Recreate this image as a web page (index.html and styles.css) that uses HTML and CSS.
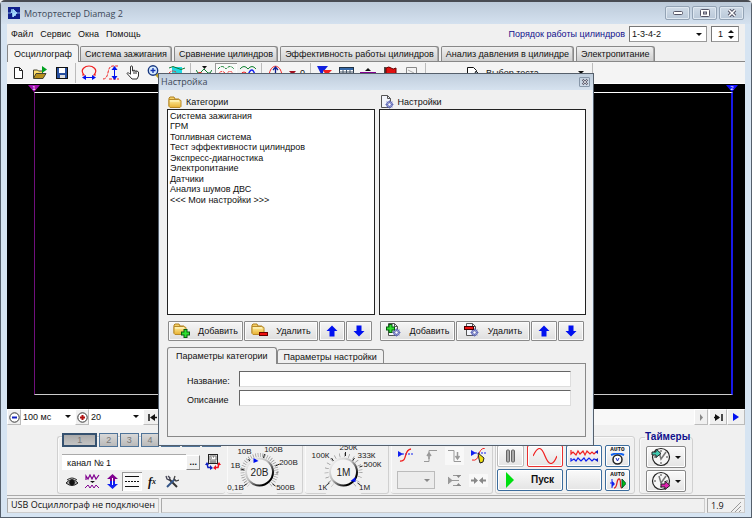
FILE: index.html
```html
<!DOCTYPE html>
<html lang="ru">
<head>
<meta charset="utf-8">
<title>Мотортестер Diamag 2</title>
<link rel="stylesheet" href="styles.css">
</head>
<body>
<svg class="defs" aria-hidden="true">
  <defs>
    <linearGradient id="fold" x1="0" y1="0" x2="0" y2="1"><stop offset="0" stop-color="#fff0a0"/><stop offset="1" stop-color="#e8b030"/></linearGradient>
    <linearGradient id="rim" x1="0" y1="0" x2="1" y2="1"><stop offset="0" stop-color="#fff"/><stop offset=".45" stop-color="#bbb"/><stop offset=".8" stop-color="#000"/></linearGradient>
    <symbol id="folder" viewBox="0 0 14 12"><path d="M1 10V2l1-1h4l1 2h4v2" fill="#f4cf65" stroke="#b08020"/><path d="M1 3.5h9.5l2.5 1v6l-1 1H2l-1-1z" fill="url(#fold)" stroke="#b88a28"/><path d="M2 5h9" stroke="#fff8cc"/></symbol>
    <symbol id="doc" viewBox="0 0 14 14"><path d="M1.500 .5h6l3 3v9h-9z" fill="#f2f4fa" stroke="#555"/><path d="M7.500 .5v3h3" fill="none" stroke="#555"/><circle cx="9.500" cy="9.500" r="3" fill="#a8b0e0" stroke="#5a64b4"/><path d="M9.500 5.500v8M5.500 9.500h8M6.700 6.700l5.600 5.600M12.300 6.700l-5.600 5.600" stroke="#6870b8"/><circle cx="9.500" cy="9.500" r="1.200" fill="#fff"/></symbol>
    <symbol id="up" viewBox="0 0 12 12"><path d="M6 .5L11.500 6H8.500v5.500h-5V6H.5z" fill="#0010f0"/></symbol>
    <symbol id="down" viewBox="0 0 12 12"><path d="M6 11.500L.5 6h3V.5h5V6h3z" fill="#0010f0"/></symbol>
    <symbol id="clock" viewBox="0 0 20 20"><circle cx="10" cy="10" r="8.500" fill="#f6f6f6" stroke="#222" stroke-width="1.200"/><path d="M10 3v2M10 15v2M3 10h2M15 10h2" stroke="#444"/><path d="M8 5l2 7 5-7" fill="none" stroke="#777" stroke-width="1.500"/></symbol>
  </defs>
</svg>
<div class="window">
  <header class="titlebar">
    <svg width="12" height="12" viewBox="0 0 12 12"><rect width="12" height="12" fill="#10208c"/><path d="M0 6h3l1-4 1 8 1-7 1 6 1-4 1 1h3M5 2v8l4-4z" fill="#a8dcff" stroke="#a8dcff" stroke-width=".7"/></svg>
    <h1>Мотортестер Diamag 2</h1>
    <div class="winbtns">
      <button aria-label="Свернуть"><svg width="10" height="8"><rect x=".5" y="2.500" width="9" height="3" rx="1" fill="#fff" stroke="#556"/></svg></button>
      <button aria-label="Развернуть"><svg width="10" height="8"><rect x=".5" y=".5" width="9" height="7" rx="1" fill="#fff" stroke="#556"/><rect x="3.500" y="3" width="3" height="2" fill="#ccd" stroke="#556"/></svg></button>
      <button aria-label="Закрыть"><svg width="10" height="8"><path d="M2 1l6 6M8 1L2 7" stroke="#556" stroke-width="3.500"/><path d="M2 1l6 6M8 1L2 7" stroke="#fff" stroke-width="1.500"/></svg></button>
    </div>
  </header>

  <main class="body">
    <div class="menurow">
      <nav class="menu"><a href="#">Файл</a><a href="#">Сервис</a><a href="#">Окна</a><a href="#">Помощь</a></nav>
      <label class="orderlabel" for="order">Порядок работы цилиндров</label>
      <span class="sel order"><select id="order"><option>1-3-4-2</option></select></span>
      <span class="spin"><input type="text" value="1" aria-label="Номер цилиндра"><span class="spinbtns"><button aria-label="Больше"></button><button aria-label="Меньше" class="less"></button></span></span>
    </div>

    <nav class="tabs">
      <button class="on">Осциллограф</button><button>Система зажигания</button><button>Сравнение цилиндров</button><button>Эффективность работы цилиндров</button><button>Анализ давления в цилиндре</button><button>Электропитание</button>
    </nav>

    <div class="toolbar">
      <button aria-label="Новый"><svg width="14" height="14"><path d="M3.500 1.500h5l3 3v8h-8z" fill="#fff" stroke="#222"/><path d="M8.500 1.500v3h3" fill="none" stroke="#222"/></svg></button>
      <button aria-label="Открыть"><svg width="16" height="14"><path d="M1.500 12V4h4l1 1h4v2" fill="#ffe070" stroke="#443"/><path d="M1.500 12.500l2.500-5h10l-3 5z" fill="#b8901c" stroke="#443"/><path d="M10 0l5 3.500L10 7z" fill="#00a020"/></svg></button>
      <button aria-label="Сохранить"><svg width="14" height="14"><rect x="1.500" y="1.500" width="11" height="11" fill="#2850a0" stroke="#111"/><path d="M4 2h6v5H4z" fill="#fff"/><path d="M5 9h5v3H5z" fill="#ddd"/></svg></button>
      <i></i>
      <button aria-label="Период"><svg width="16" height="15"><path d="M1 10h2C-2 4 5 1 8 1s10 3 5 9h2" fill="none" stroke="#f02020" stroke-width="1.200"/><path d="M2 12.500h12" stroke="#0010f0"/><path d="M5 10v5l-4-2.500zM11 10v5l4-2.500z" fill="#0010f0"/></svg></button>
      <button aria-label="Амплитуда"><svg width="16" height="15"><path d="M0 14c7 0 3-13 10-13h5M6 14h10" fill="none" stroke="#f02020" stroke-dasharray="3 1"/><path d="M11.500 3v10" stroke="#0010f0"/><path d="M8.500 5l3-4 3 4zM8.500 11l3 4 3-4z" fill="#0010f0"/></svg></button>
      <button aria-label="Рука"><svg width="14" height="15"><path d="M4.500 9V2c0-1.500 2-1.500 2 0v4l1.500-1 1.500 1 1.500 0 1.500 1v4L11 14H6L1 8.500c0-1 2-1 3.500 1" fill="#fff" stroke="#333"/><path d="M8 6v3M10 6v3" stroke="#333"/></svg></button>
      <button aria-label="Масштаб"><svg width="16" height="15"><path d="M9 9l5 5" stroke="#c0a020" stroke-width="3"/><circle cx="6" cy="5.500" r="4.700" fill="#d8ecff" stroke="#183880" stroke-width="1.400"/><path d="M6 3v5M3.500 5.500h5" stroke="#1030b0" stroke-width="1.300"/></svg></button>
      <button aria-label="Область"><svg width="16" height="15"><path d="M3 2h10v12H3z" fill="#20d8e0"/><path d="M0 3q4-3 8 0t8 0" fill="none" stroke="#0a7a30"/><path d="M0 8q4-4 8 0t8 0" fill="none" stroke="#f02020" stroke-dasharray="2 1"/></svg></button>
      <i></i>
      <button aria-label="Уровень"><svg width="16" height="15"><path d="M6 1h5l-2.500 3z" fill="#111"/><path d="M0 5l2 3h2l4-4 4 4h2l2-3" fill="none" stroke="#108030"/><path d="M0 10q4-5 8 0t8-2" fill="none" stroke="#f02020"/></svg></button>
      <button aria-label="Наложение" class="pressed"><svg width="16" height="15"><path d="M0 4q4-5 8 0 4-5 8 0" fill="none" stroke="#108030" stroke-dasharray="3 1"/><path d="M0 9q4-5 8 0 4-5 8 0" fill="none" stroke="#f02020" stroke-dasharray="2 1"/></svg></button>
      <button aria-label="Графики"><svg width="16" height="15"><path d="M0 4q4-5 8 0 4-5 8 0" fill="none" stroke="#108030"/><path d="M8 10q4-10 7 0" fill="none" stroke="#1020f0" stroke-width="1.300"/><path d="M0 10q4-6 8 0" fill="none" stroke="#f02020"/></svg></button>
      <i></i>
      <button aria-label="Ноль"><svg width="15" height="15"><path d="M1 11C2-2 13-2 14 11" fill="none" stroke="#f02020"/><path d="M7.500 2v12M5 5l2.500-3L10 5" fill="none" stroke="#102090" stroke-width="1.300"/></svg></button>
      <button class="zero"><svg width="7" height="6"><path d="M0 1h7L3.500 5z" fill="#a01020"/></svg>0</button>
      <i></i>
      <button aria-label="Фильтр"><svg width="15" height="15"><path d="M0 1h11L6 7v6z" fill="#1020e0"/><path d="M6 5h9l-4 4v5z" fill="#f02020"/></svg></button>
      <button aria-label="Таблица"><svg width="15" height="14"><rect x=".5" y="1.500" width="14" height="11" fill="#fff" stroke="#234"/><path d="M1 2h13v2H1z" fill="#3468a8"/><path d="M0 6h15M0 8.500h15M4 4v9M7.500 4v9M11 4v9" stroke="#456"/></svg></button>
      <button aria-label="Линия"><svg width="16" height="14"><path d="M5 5h6L8 2z" fill="#111"/><path d="M0 7h16" stroke="#800090" stroke-width="2"/></svg></button>
      <button aria-label="Флаг"><svg width="14" height="14"><path d="M2 1v13" stroke="#111" stroke-width="1.500"/><path d="M3 2q3-2 5 0t5 0v7q-3 2-5 0t-5 0z" fill="#e01010" stroke="#600"/></svg></button>
      <button aria-label="Заметка"><svg width="14" height="14"><path d="M1.500 1.500h10v8l-3 3h-7z" fill="#f4f4f4" stroke="#888"/><path d="M3 4l6 3-4 4" stroke="#aaa" fill="none"/></svg></button>
      <i></i>
      <button class="test"><svg width="16" height="14"><path d="M1.500 1.500h6l3 3v8h-9z" fill="#fff" stroke="#111"/><path d="M8 9l2-4 5 5-1 2z" fill="#9ab" stroke="#222"/></svg><span>Выбор теста</span><b class="arrow"></b></button>
      <i></i>
    </div>

    <section class="scope" aria-label="Экран осциллографа">
      <div class="plot"><span class="mark m1">1</span><span class="mark m2">2</span></div>
    </section>

    <div class="scroll">
      <button class="rnd" aria-label="Уменьшить"><svg width="13" height="13"><circle cx="6.500" cy="6.500" r="4.700" fill="#fff" stroke="#333"/><path d="M4 6.500h5" stroke="#1020c0" stroke-width="2"/></svg></button>
      <span class="sel"><select aria-label="Развёртка"><option>100 мс</option></select></span>
      <button class="rnd" aria-label="Увеличить"><svg width="13" height="13"><circle cx="6.500" cy="6.500" r="4.700" fill="#fff" stroke="#333"/><path d="M4 6.500h5M6.500 4v5" stroke="#b01010" stroke-width="2"/></svg></button>
      <span class="sel"><select aria-label="Масштаб"><option>20</option></select></span>
      <button class="nav" aria-label="В начало"><svg width="9" height="7"><path d="M1 0v7M5 3.500h4" stroke="#111" stroke-width="1.500"/><path d="M7 0v7L2 3.500z" fill="#111"/></svg></button>
      <span class="track"></span>
      <button class="nav slim" aria-label="Вправо"><svg width="5" height="7"><path d="M1 0v7l3-3.500z" fill="#888"/></svg></button>
      <button class="nav" aria-label="В конец"><svg width="9" height="7"><path d="M1 0v7l5-3.500z" fill="#111"/><path d="M0 3.500h5M8 0v7" stroke="#111" stroke-width="1.500"/></svg></button>
      <button class="nav" aria-label="Пуск прокрутки"><svg width="8" height="8"><path d="M1 0v8l6-4z" fill="#0010f0"/></svg></button>
    </div>

    <div class="panel">
      <section class="group chan">
        <div class="chtabs"><button class="on">1</button><button>2</button><button>3</button><button>4</button><button>5</button><button>6</button><button>7</button></div>
        <div class="chname"><input type="text" value="канал № 1" aria-label="Имя канала"><button aria-label="Обзор">...</button>
          <svg width="16" height="16" viewBox="0 0 16 16"><rect x="3.500" y=".5" width="9" height="9" fill="#ddd" stroke="#222"/><path d="M5 2h6v4H5z" fill="#fff" stroke="#777"/><path d="M6 4h1M8 3h1M5 8h6" stroke="#555"/><path d="M6 13.500H3L2 10" fill="none" stroke="#1020c0" stroke-width="1.500"/><path d="M4 11H0l2-3zM5 11v5l3-2z" fill="#1020c0"/><path d="M10 13.500h3l1-4" fill="none" stroke="#f01020" stroke-width="1.500"/><path d="M12 11h4l-2-3zM11 11v5l-3-2z" fill="#f01020"/></svg></div>
        <div class="chtools">
          <button aria-label="Видимость"><svg width="12" height="10"><path d="M0 6q6-7 12 0-6 5-12 0z" fill="#aaa" stroke="#222"/><circle cx="6" cy="5.500" r="2.800" fill="#111"/><path d="M1 3q5-4 10 0" fill="none" stroke="#222"/></svg></button>
          <button aria-label="Инверсия"><svg width="15" height="15"><path d="M1 6V2l2 3 2-4 2 4 2-4 2 4 3-4" fill="none" stroke="#800090" stroke-width="1.200"/><path d="M5 7h5L7.500 9z" fill="#111"/><path d="M0 14l3-3 2 3 2-3 2 3 2-3 3 3" fill="none" stroke="#800090"/></svg></button>
          <button aria-label="Смещение"><svg width="13" height="15"><path d="M6.500 0L12 5H9v2H4V5H1z" fill="#800090"/><path d="M6.500 15L12 10H9V7H4v3H1z" fill="#1020f0"/><path d="M6.500 4v7" stroke="#fff"/></svg></button>
          <button aria-label="Линии" class="pressed"><svg width="16" height="13"><path d="M1 1.500h14M1 11.500h14" stroke="#111"/><path d="M1 6.500h14" stroke="#111" stroke-dasharray="2 1"/></svg></button>
          <button class="fx" aria-label="Функция">f<small>x</small></button>
          <button aria-label="Инструменты"><svg width="14" height="14"><path d="M4 4l8 8" stroke="#333" stroke-width="2"/><path d="M1 1l1 3 2 1 1-2-2-2" fill="none" stroke="#445" stroke-width="1.300"/><path d="M10 4l-8 8" stroke="#358" stroke-width="2"/><path d="M10 1l-1 3 2 2 3-1" fill="none" stroke="#444" stroke-width="1.300"/></svg></button>
        </div>
      </section>

      <section class="group knob">
        <svg viewBox="0 0 74 54" role="img" aria-label="Диапазон 20В">
          <circle cx="32" cy="31" r="17" class="ticks" pathLength="360" stroke-dasharray="2 6" /><path d="M32 31L14 53h36z" fill="#f0f0f0"/>
          <path d="M21 18l2 3M37 13l-1 4M48 25l4-2M13 28l4 1M19 43l-3 2M45 43l3 2" class="maj"/>
          <circle cx="32" cy="31" r="13.500" class="dial"/><path d="M26 17v5l5-2z" fill="#0010f0"/>
          <text x="32" y="35" class="big">20В</text>
          <text x="8" y="49">0,1В</text><text x="8" y="27">1В</text><text x="17" y="13">10В</text><text x="46" y="11">100В</text><text x="61" y="24">200В</text><text x="58" y="49">500В</text>
        </svg>
      </section>
      <section class="group knob">
        <svg viewBox="3 0 78 54" role="img" aria-label="Сопротивление 1М">
          <circle cx="39" cy="31" r="17" class="ticks" pathLength="360" stroke-dasharray="2 14"/><path d="M39 31L21 53h36z" fill="#f0f0f0"/>
          <path d="M27 17l2 3M41 11v4M50 17l-2 3M55 26l3-1M25 42l-3 2M53 42l3 2" class="maj"/>
          <circle cx="39" cy="31" r="13.500" class="dial"/><path d="M46 40l5-4v5z" fill="#0010f0"/>
          <text x="39" y="35" class="big">1М</text>
          <text x="18" y="49">1К</text><text x="16" y="17">100К</text><text x="44" y="9">250К</text><text x="62" y="17">333К</text><text x="68" y="26">500К</text><text x="60" y="49">1М</text>
        </svg>
      </section>

      <section class="group sync">
        <button aria-label="Синхронизация"><svg width="16" height="16"><path d="M0 3v6l5-3z" fill="#1020f0"/><path d="M4 6h12" stroke="#1020f0" stroke-dasharray="2 1"/><path d="M2 13c8 1 3-11 11-12" fill="none" stroke="#f02020" stroke-width="1.300"/></svg></button>
        <button aria-label="По фронту"><svg width="15" height="14"><path d="M1 12.500h5v-11h8" fill="none" stroke="#999"/><path d="M6 4v6M4 7l2-3 2 3" fill="none" stroke="#999" stroke-width="1.500"/></svg></button>
        <button aria-label="По спаду" class="pale"><svg width="15" height="14"><path d="M1 1.500h6v11h7" fill="none" stroke="#999"/><path d="M10.500 3v7M8.500 7l2 3 2-3" fill="none" stroke="#999" stroke-width="1.500"/></svg></button>
        <button aria-label="Ручная"><svg width="16" height="16"><path d="M0 2v6l5-3z" fill="#1020f0"/><path d="M4 5h12" stroke="#1020f0" stroke-dasharray="2 1"/><path d="M1 12c9 2 4-11 13-12" fill="none" stroke="#f02020"/><path d="M7 5l6 5-1 4-3 1-1-4z" fill="#f0e010" stroke="#222"/></svg></button>
        <span class="sel off"><select aria-label="Источник" disabled><option></option></select></span>
        <button aria-label="Уровень"><svg width="14" height="13"><path d="M0 3v7l4-3.500zM3 6.500h8M5 1.500h8M5 11.500h8" fill="#999" stroke="#999"/><path d="M8 1h5l-2.500 3zM8 12h5l-2.500-3z" fill="#888"/></svg></button>
        <button aria-label="Сжать" class="pale"><svg width="15" height="9"><path d="M0 4.500h5M10 4.500h5" stroke="#888" stroke-width="2"/><path d="M3 1v7l4-3.500zM12 1v7L8 4.500z" fill="#888"/></svg></button>
      </section>

      <section class="group run">
        <button class="grey" aria-label="Пауза"><svg width="10" height="14"><rect x=".5" y="1" width="3" height="12" rx="1" fill="#aaa" stroke="#666"/><rect x="5.500" y="1" width="3" height="12" rx="1" fill="#aaa" stroke="#666"/></svg></button>
        <button class="red" aria-label="Синус"><svg width="24" height="16"><path d="M0 8C5-2 8-2 12 8s8 10 12 0" fill="none" stroke="#f02020" stroke-width="1.200"/></svg></button>
        <button aria-label="Сигналы"><svg width="28" height="16"><path d="M1 2v4l2-2 3 3 2-4 2 3 3-3 2 4 2-4 3 3 2-2 2 2 2-2" fill="none" stroke="#f02020" stroke-width="1.200"/><path d="M1 10v3l3-2 2 2 2-3 3 3 3-3 2 3 3-3 3 3 2-2 3 1" fill="none" stroke="#1020f0" stroke-width="1.200"/><path d="M28 2v4l-3-2zM28 10v4l-3-2z" fill="#1020c0"/></svg></button>
        <button aria-label="Автодиапазон" class="auto"><span>AUTO</span><svg width="15" height="12"><path d="M1 2q7-3 13 0" fill="none" stroke="#1060f0" stroke-width="2"/><circle cx="7.500" cy="6.500" r="4.500" fill="#fff" stroke="#222" stroke-width="1.500"/><path d="M6 5l1.500 3L9 5" fill="none" stroke="#1020c0"/></svg></button>
        <button class="start"><svg width="9" height="16"><path d="M0 0v16l8-8z" fill="#00e010"/></svg><b>Пуск</b></button>
        <button aria-label="Пустая"></button>
        <button aria-label="Автопуск" class="auto"><span>AUTO</span><svg width="16" height="11"><path d="M2 1v9M0 5h4" stroke="#1020f0"/><path d="M2 3l3 3-3 3z" fill="#1020f0"/><path d="M4 10c4 0 2-9 5-9s0 9 3 9" fill="none" stroke="#e02020" stroke-width="1.300"/><path d="M12 1v9l4-4.500z" fill="#00c010" stroke="#053"/></svg></button>
      </section>

      <fieldset class="group timers">
        <legend>Таймеры</legend>
        <button aria-label="Таймер пуска"><svg width="20" height="20"><use href="#clock"/><path d="M1 5h4V2l5 4.500-5 4V8H1z" fill="#40c8b0" stroke="#222"/></svg><b class="arrow"></b></button>
        <button aria-label="Таймер остановки"><svg width="20" height="20"><use href="#clock"/><path d="M10 13h4v-3l5 4.500-5 4V16h-4z" fill="#e020b0" stroke="#222"/></svg><b class="arrow"></b></button>
      </fieldset>
    </div>

    <footer class="status"><span class="s1">USB Осциллограф не подключен</span><span class="s2"></span><span class="s3">1.9<svg width="10" height="10"><path d="M0 10L10 0M4 10l6-6M8 10l2-2" stroke="#999"/></svg></span></footer>
  </main>
</div>

<div class="dialog" role="dialog" aria-labelledby="dlg">
  <div class="dlgtitle"><h2 id="dlg">Настройка</h2><button aria-label="Закрыть окно"><svg width="8" height="8"><path d="M1.500 1.500l5 5M6.500 1.500l-5 5" stroke="#556" stroke-width="2"/><path d="M1.500 1.500l5 5M6.500 1.500l-5 5" stroke="#fff" stroke-width=".7"/></svg></button></div>
  <div class="dlgbody">
    <div class="cols">
      <section>
        <h3><svg width="14" height="12"><use href="#folder"/></svg>Категории</h3>
        <ul class="list"><li>Система зажигания</li><li>ГРМ</li><li>Топливная система</li><li>Тест эффективности цилиндров</li><li>Экспресс-диагностика</li><li>Электропитание</li><li>Датчики</li><li>Анализ шумов ДВС</li><li>&lt;&lt;&lt; Мои настройки &gt;&gt;&gt;</li></ul>
        <div class="acts">
          <button><svg width="18" height="16"><use href="#folder" width="14" height="12"/><path d="M12.500 6v9M8 10.500h9" stroke="#075c10" stroke-width="4"/><path d="M12.500 7v7M9 10.500h7" stroke="#30e030" stroke-width="2"/></svg><span>Добавить</span></button>
          <button><svg width="18" height="16"><use href="#folder" width="14" height="12"/><path d="M8 11h9" stroke="#600" stroke-width="4"/><path d="M9 11h7" stroke="#f01010" stroke-width="2"/></svg><span>Удалить</span></button>
          <button aria-label="Категорию вверх"><svg width="12" height="12"><use href="#up"/></svg></button>
          <button aria-label="Категорию вниз"><svg width="12" height="12"><use href="#down"/></svg></button>
        </div>
      </section>
      <section>
        <h3><svg width="14" height="14"><use href="#doc"/></svg>Настройки</h3>
        <ul class="list"></ul>
        <div class="acts">
          <button><svg width="18" height="16"><use href="#doc" x="2" width="14" height="14"/><path d="M5.500 1v9M1 5.500h9" stroke="#075c10" stroke-width="4"/><path d="M5.500 2v7M2 5.500h7" stroke="#30e030" stroke-width="2"/></svg><span>Добавить</span></button>
          <button><svg width="18" height="16"><use href="#doc" x="2" width="14" height="14"/><path d="M1 5h10" stroke="#400" stroke-width="4"/><path d="M2 5h8" stroke="#f01010" stroke-width="2"/></svg><span>Удалить</span></button>
          <button aria-label="Настройку вверх"><svg width="12" height="12"><use href="#up"/></svg></button>
          <button aria-label="Настройку вниз"><svg width="12" height="12"><use href="#down"/></svg></button>
        </div>
      </section>
    </div>
    <div class="ptabs"><button class="on">Параметры категории</button><button>Параметры настройки</button></div>
    <form class="params">
      <label for="nm">Название:</label><input id="nm" type="text">
      <label for="ds">Описание</label><input id="ds" type="text">
    </form>
  </div>
</div>
</body>
</html>
```
FILE: styles.css
```css
* { box-sizing: border-box; }
body { margin: 0; background: #f0f0f0; color: #111; }
body, button, input, select { font: 9px/12px "Liberation Sans", sans-serif; }
button { color: inherit; background: none; border: 0; padding: 0; display: flex; align-items: center; justify-content: center; white-space: nowrap; }
input, select { color: inherit; border: 0; margin: 0; border-radius: 0; outline: 0; min-width: 0; }
svg { display: block; flex: none; }
.defs { position: absolute; width: 0; height: 0; }
h1, h2, h3, ul { margin: 0; padding: 0; font: inherit; list-style: none; }

.window { height: 100vh; min-height: 500px; display: flex; flex-direction: column; padding: 0 6px 4px; background: #d6e4f2; border: 1px solid #555f6b; border-top: 2px solid #484b52; border-radius: 5px 5px 0 0; }
.titlebar { flex: none; height: 22px; margin: 0 -6px; padding: 0 7px; display: flex; align-items: center; gap: 4px; background: linear-gradient(#bccad9, #d4e1ef); }
.titlebar h1 { font: 9px/12px "Open Sans", sans-serif; color: #3c4858; flex: 1; padding-top: 2px; }
.winbtns { display: flex; gap: 2px; }
.winbtns button { width: 25px; height: 14px; border: 1px solid #93a3b5; border-radius: 2px; background: linear-gradient(#d0dbe7, #b9c8d8); box-shadow: inset 0 0 0 1px #dfe8f1; }

.body { flex: 1; min-height: 0; display: flex; flex-direction: column; background: #f0f0f0; }
.menurow { flex: none; height: 20px; display: flex; align-items: center; padding: 0 6px 0 4px; }
.menu { display: flex; gap: 7px; flex: 1; }
.menu a { color: #111; text-decoration: none; }
.orderlabel { color: #10108c; margin-right: 4px; }
.sel { position: relative; display: flex; background: #fff; height: 16px; }
.sel select { appearance: none; background: transparent; width: 100%; padding: 0 12px 0 2px; }
.sel::after, .arrow { content: ""; width: 0; height: 0; border: 3px solid transparent; border-top-color: #111; border-bottom: 0; }
.sel::after { position: absolute; right: 4px; top: 6px; pointer-events: none; }
.order, .spin { border: 1px solid #777; border-right-color: #999; border-bottom-color: #999; }
.order { width: 78px; }
.spin { display: flex; width: 28px; height: 16px; margin-left: 4px; background: #fff; }
.spin input { width: 16px; padding: 0 0 0 6px; }
.spinbtns { display: flex; flex-direction: column; justify-content: center; gap: 3px; }
.spinbtns button { width: 6px; border: 3px solid transparent; border-top: 0; border-bottom-color: #111; }
.spinbtns .less { border-top: 3px solid #111; border-bottom: 0; }

.tabs { flex: none; height: 18px; display: flex; align-items: flex-end; gap: 2px; border-bottom: 1px solid #888; }
.tabs button { height: 15px; padding: 0 4px; background: linear-gradient(#f0f0f0, #cfcfcf); border: 1px solid #888; border-bottom: 0; border-radius: 2px 3px 0 0; box-shadow: inset -1px 0 #aaa; }
.tabs .on { height: 18px; padding: 0 6px; margin: 0 -1px -1px 0; background: #f4f4f4; box-shadow: none; }

.toolbar { flex: none; height: 22px; display: flex; align-items: center; background: #f4f4f4; border-bottom: 1px solid #fff; }
.toolbar button { width: 22px; height: 20px; }
.toolbar i { width: 1px; height: 20px; margin: 0 2px; background: #bbb; }
.toolbar .pressed, .chtools .pressed { background: #f9f9f9; box-shadow: inset 1px 1px #999, inset -1px -1px #fff; }
.toolbar .zero { gap: 4px; }
.toolbar .test { width: 124px; margin-left: 38px; gap: 4px; justify-content: flex-start; }
.test .arrow { margin-left: auto; margin-right: 6px; }

.scope { flex: 1; min-height: 0; display: flex; background: #000; padding: 8px 12px 14px 27px; }
.plot { flex: 1; position: relative; border: 1px solid #fff; border-bottom-color: #ccc; border-left-color: #70107c; border-right: 2px solid #1818e8; }
.mark { position: absolute; top: -8px; width: 12px; height: 7px; font: 6px/6px "Liberation Sans", sans-serif; color: #fff; text-align: center; clip-path: polygon(0 0, 100% 0, 50% 100%); }
.m1 { left: -7px; background: #a010b0; }
.m2 { right: -7px; background: #1010ff; }

.scroll { flex: none; height: 16px; display: flex; background: #f8f8f8; }
.scroll .sel { width: 54px; }
.scroll button { border: 1px solid #bbb; border-top-color: #fff; border-left-color: #fff; background: #f0f0f0; }
.rnd { width: 14px; }
.nav { width: 18px; }
.scroll .slim { width: 14px; margin-right: 1px; }
.track { flex: 1; }

.panel { flex: none; height: 70px; display: flex; padding: 11px 0 1px 50px; gap: 2px; }
.group { border: 1px solid #d0d0d0; border-radius: 3px; box-shadow: inset 1px 1px #fafafa; margin: 0; min-width: 0; flex: none; }
.chan { width: 168px; padding: 0 4px; border-right: 0; }
.chtabs { display: flex; gap: 2px; margin-top: -4px; }
.chtabs button { width: 20px; height: 14px; border: 1px solid #4f7398; background: linear-gradient(#d8d8d8, #bababa); color: #777; }
.chtabs .on { width: 38px; border: 2px solid #35516f; background: linear-gradient(#aaa, #c4c4c4); }
.chname { display: flex; align-items: center; margin-top: 7px; height: 16px; }
.chname input { width: 128px; height: 16px; padding: 0 5px; background: #fff; border-top: 1px solid #aaa; }
.chname button { width: 14px; height: 15px; border: 1px solid #888; border-top-color: #fff; border-left-color: #fff; background: #f0f0f0; margin-right: 5px; font-weight: bold; }
.chtools { display: flex; height: 20px; margin-top: 2px; }
.chtools button { width: 20px; height: 19px; }
.fx { font: italic bold 12px/12px "Liberation Serif", serif; }
.fx small { font-size: 8px; }
.knob { width: 76px; padding: 4px 0 0; border-left: 0; }
.knob + .knob { width: 84px; }
.knob svg { width: 100%; height: 54px; overflow: visible; }
.knob text { font-size: 8px; text-anchor: middle; fill: #222; }
.knob .big { font-size: 10px; }
.ticks { fill: none; stroke: #888; stroke-width: 4; }
.maj { stroke: #222; }
.dial { fill: #f3f3f3; stroke: url(#rim); stroke-width: 2; }
.sync { width: 102px; padding: 8px 1px 0 3px; display: grid; grid-template-columns: repeat(4, 1fr); grid-template-rows: 22px 22px; row-gap: 2px; align-items: center; justify-items: center; border-left: 0; }
.sync .sel { grid-column: span 2; width: 38px; height: 18px; margin-right: 4px; background: #ececec; border: 1px solid #bbb; }
.sync .off::after { border-top-color: #888; top: 7px; }
.sync .pale { background: #f8f8f8; padding: 2px; }
.run { width: 140px; padding: 8px 1px 0; display: grid; grid-template-columns: 27px 36px 36px 25px; grid-template-rows: 22px 22px; gap: 2px 3px; }
.run button, .timers button { border: 1px solid #3c6c9c; border-radius: 2px; background: linear-gradient(#fafafa, #e4e4e4); box-shadow: inset 0 0 0 1px #fff; }
.run .grey { border-color: #bbb; }
.run .red { border-color: #e83030; }
.run .start { grid-column: span 2; gap: 16px; }
.start b { font-size: 10px; }
.run .auto { flex-direction: column; font: bold 6px/6px "Liberation Mono", monospace; }
.timers { width: 54px; padding: 3px 6px 0; margin: -5px 0 0 2px; display: flex; flex-direction: column; gap: 2px; }
.timers legend { font-weight: bold; font-size: 10px; color: #10108c; padding: 0; margin: 0 -1px; line-height: 12px; }
.timers button { width: 40px; height: 22px; gap: 4px; border-color: #888; }

.status { flex: none; height: 18px; display: flex; gap: 2px; padding-top: 2px; border-top: 1px solid #aaa; font: 9px/12px "Open Sans", sans-serif; }
.status span { border: 1px solid #ccc; border-top-color: #aaa; border-left-color: #aaa; padding: 0 3px; }
.s1 { width: 152px; white-space: nowrap; }
.s2 { flex: 1; }
.s3 { width: 38px; display: flex; justify-content: space-between; align-items: flex-end; }

.dialog { position: absolute; left: 158px; top: 73px; width: 436px; background: #f0f0f0; border: 1px solid #555f6b; box-shadow: inset 0 0 0 1px #e4eef8; }
.dlgtitle { height: 16px; display: flex; align-items: center; justify-content: space-between; padding: 0 3px 0 2px; background: linear-gradient(#bfcddc, #d6e2ef); }
.dlgtitle h2 { font: 9px/14px "Open Sans", sans-serif; color: #3c4858; }
.dlgtitle button { width: 11px; height: 10px; border: 1px solid #8797a9; border-radius: 1px; }
.dlgbody { padding: 4px 7px 8px 8px; }
.cols { display: grid; grid-template-columns: 1fr 1fr; gap: 4px; }
.cols h3 { height: 15px; display: flex; align-items: center; gap: 4px; padding-left: 1px; }
.list { height: 206px; background: #fff; border: 1px solid #222; padding: 1px 2px; }
.list li { height: 10px; line-height: 11px; }
.list li:nth-child(even) { height: 11px; }
.acts { display: grid; grid-template-columns: 75px 74px 26px 26px; gap: 1px; margin: 6px 0 0 1px; }
.acts button { height: 20px; gap: 7px; border: 1px solid #8a8a8a; border-radius: 1px; background: linear-gradient(#f6f6f6, #dedede); box-shadow: inset 0 0 0 1px #fafafa; }
.ptabs { display: flex; align-items: flex-end; height: 17px; margin-top: 5px; }
.ptabs button { height: 14px; padding: 0 6px; border: 1px solid #888; border-bottom: 0; border-radius: 3px 3px 0 0; }
.ptabs .on { height: 17px; padding: 0 8px; background: #f0f0f0; position: relative; z-index: 1; margin-bottom: -1px; }
.params { display: grid; grid-template-columns: 48px 1fr; gap: 3px 4px; align-items: end; border: 1px solid #888; padding: 7px 14px 30px 19px; }
.params input { width: 100%; height: 16px; background: #fff; border: 1px solid #ddd; border-top: 1px solid #666; border-left: 1px solid #666; }
```
